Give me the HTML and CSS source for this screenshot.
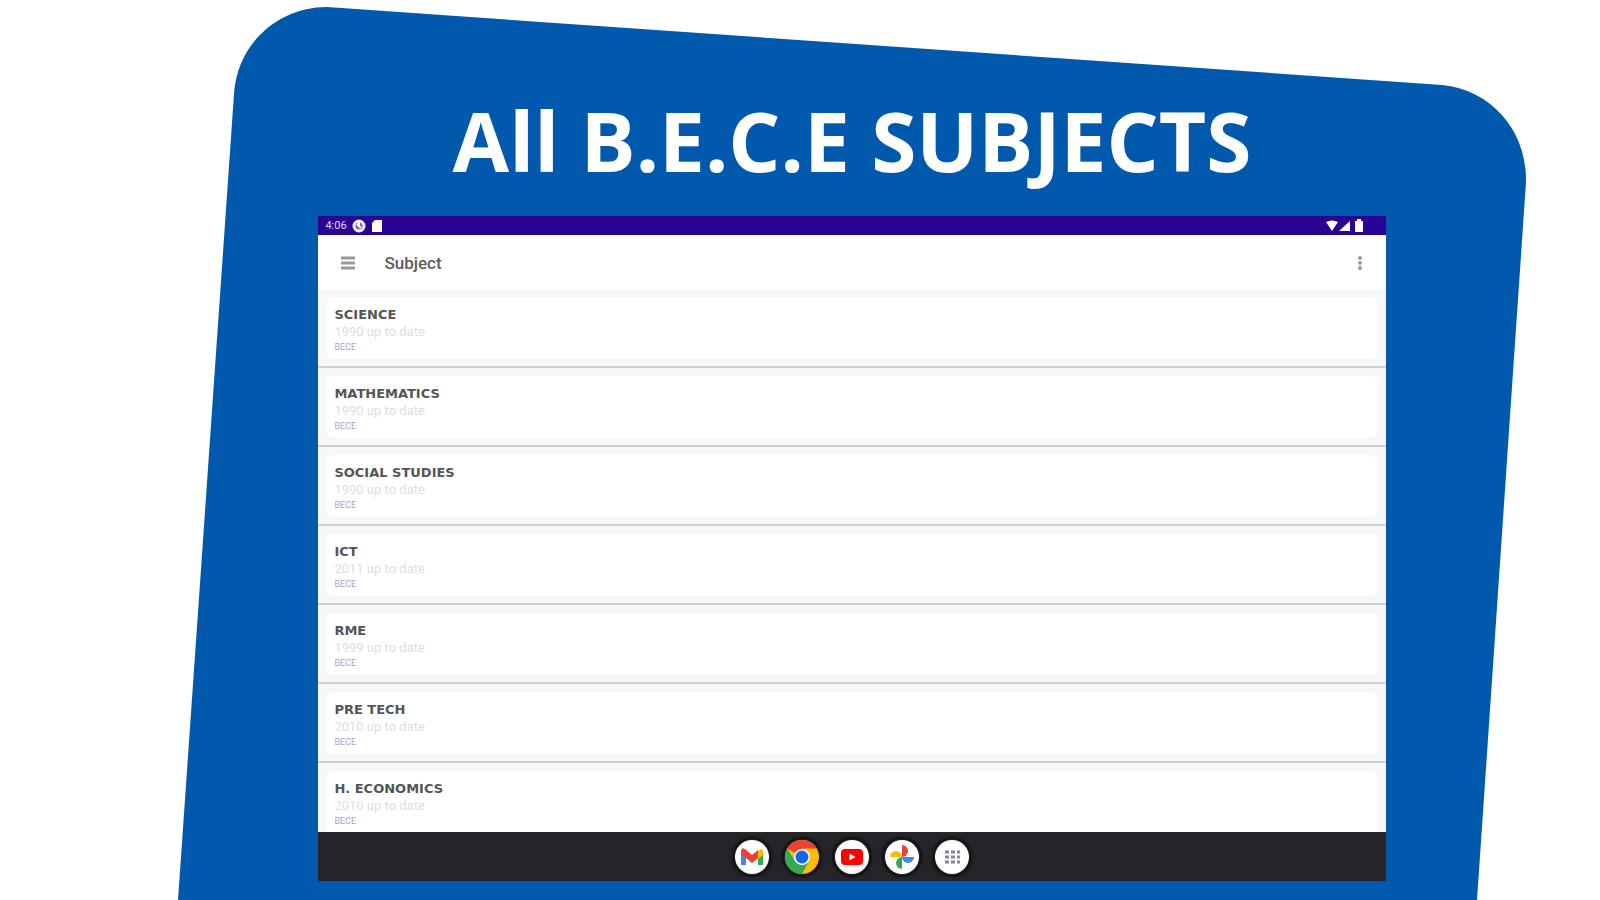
FILE: index.html
```html
<!DOCTYPE html>
<html lang="en">
<head>
<meta charset="utf-8">
<meta name="viewport" content="width=device-width, initial-scale=1">
<title>All B.E.C.E SUBJECTS</title>
<link rel="stylesheet" href="styles.css">
</head>
<body>
<main class="promo">
  <svg class="backdrop" viewBox="0 0 1600 900" preserveAspectRatio="none" aria-hidden="true"><path d="M178 900L234 94C237 45 277 7 327 7L1442 85C1491 90 1527 130 1526 182L1477 900Z" fill="#0059ad"/></svg>
  <h1 class="headline">All B.E.C.E SUBJECTS</h1>
  <section class="tablet">
    <div class="status">
      <span class="status-group">
        <span class="clock">4:06</span>
        <svg width="14" height="14" viewBox="0 0 14 14"><circle cx="7" cy="7" r="5" fill="#8060c0" stroke="#f4eefc" stroke-width="3"/><path d="M5 5l4 4M7 3v4" stroke="#fff" stroke-width="2"/></svg>
        <svg width="12" height="14" viewBox="0 0 12 14"><path d="M4 1h7v12H1V4z" fill="#fff"/></svg>
      </span>
      <svg width="40" height="14" viewBox="0 0 40 14"><path d="M0 3Q6 0 12 3L6 12zM13 12L24 2v10zM29 2h2V0h4v2h2v11h-8z" fill="#fff"/></svg>
    </div>
    <header class="appbar">
      <button class="icon-button" aria-label="Menu"><svg width="16" height="14" viewBox="0 0 16 14"><path d="M1 2h14M1 7h14M1 12h14" stroke="#9a9a9a" stroke-width="3"/></svg></button>
      <h2 class="title">Subject</h2>
      <button class="icon-button" aria-label="More options"><svg width="6" height="16" viewBox="0 0 6 16" fill="#9a9a9a"><circle cx="3" cy="3" r="2"/><circle cx="3" cy="8" r="2"/><circle cx="3" cy="13" r="2"/></svg></button>
    </header>
    <ul class="subjects">
      <li class="row"><article class="card"><h3>SCIENCE</h3><p>1990 up to date</p><a href="#">BECE</a></article></li>
      <li class="row"><article class="card"><h3>MATHEMATICS</h3><p>1990 up to date</p><a href="#">BECE</a></article></li>
      <li class="row"><article class="card"><h3>SOCIAL STUDIES</h3><p>1990 up to date</p><a href="#">BECE</a></article></li>
      <li class="row"><article class="card"><h3>ICT</h3><p>2011 up to date</p><a href="#">BECE</a></article></li>
      <li class="row"><article class="card"><h3>RME</h3><p>1999 up to date</p><a href="#">BECE</a></article></li>
      <li class="row"><article class="card"><h3>PRE TECH</h3><p>2010 up to date</p><a href="#">BECE</a></article></li>
      <li class="row"><article class="card"><h3>H. ECONOMICS</h3><p>2010 up to date</p><a href="#">BECE</a></article></li>
    </ul>
    <nav class="dock">
      <button class="app" aria-label="Gmail"><svg viewBox="0 0 36 36"><circle cx="18" cy="18" r="17" fill="#fff"/><path d="M7 13v13h5V16z" fill="#4285f4"/><path d="M29 13v13h-5V16z" fill="#34a853"/><path d="M24 12l3-2q2 0 2 3v3l-5 4z" fill="#fbbc04"/><path d="M7 12q0-4 4-2l7 6 6-5v8l-6 5-6-5-5-4z" fill="#ea4335"/></svg></button>
      <button class="app" aria-label="Chrome"><svg viewBox="0 0 36 36"><circle cx="18" cy="18" r="17" fill="#fbbc04"/><path d="M18 18L3.300 9.500A17 17 0 0 1 32.700 9.500H18z" fill="#ea4335"/><path d="M3.300 9.500A17 17 0 0 0 18 35L25 22 18 18 11 22z" fill="#34a853"/><circle cx="18" cy="18" r="8" fill="#fff"/><circle cx="18" cy="18" r="6.500" fill="#1a66e8"/></svg></button>
      <button class="app" aria-label="YouTube"><svg viewBox="0 0 36 36"><circle cx="18" cy="18" r="17" fill="#fff"/><rect x="7" y="10" width="22" height="16" rx="4" fill="#f00"/><path d="M15.500 14.500v7l6-3.500z" fill="#fff"/></svg></button>
      <button class="app" aria-label="Photos"><svg viewBox="0 0 36 36"><circle cx="18" cy="18" r="17" fill="#fff"/><path d="M18 18V6a6 6 0 0 1 0 12" fill="#ea4335"/><path d="M18 18h12a6 6 0 0 1-12 0" fill="#4285f4"/><path d="M18 18v12a6 6 0 0 1 0-12" fill="#34a853"/><path d="M18 18H6a6 6 0 0 1 12 0" fill="#fbbc04"/></svg></button>
      <button class="app" aria-label="All apps"><svg viewBox="0 0 36 36"><circle cx="18" cy="18" r="17" fill="#fff"/><path d="M11 13h4M17 13h4M23 13h3M11 18h4M17 18h4M23 18h3M11 23h4M17 23h4M23 23h3" stroke="#85869c" stroke-width="3"/></svg></button>
    </nav>
  </section>
</main>
</body>
</html>
```
FILE: styles.css
```css
* { box-sizing: border-box; }
body { margin: 0; background: #fff; font-family: Roboto, sans-serif; }
h1, h2, h3, p, ul { margin: 0; padding: 0; }
.promo {
  position: relative;
  display: flex;
  flex-direction: column;
  height: 100vh;
  padding: 80px 13.4% 19px 19.9%;
  overflow: hidden;
}
.backdrop { position: absolute; inset: 0; width: 100%; height: 100%; z-index: -1; }
.headline {
  color: #fff;
  font: bold 82px/120px "Open Sans", "Noto Sans", sans-serif;
  text-align: center;
  white-space: nowrap;
  padding-bottom: 16px;
}
.tablet { display: flex; flex-direction: column; flex: 1; min-height: 0; background: #f7f7f7; }
.status {
  display: flex;
  flex-shrink: 0;
  justify-content: space-between;
  align-items: center;
  height: 19px;
  padding: 0 20px 0 7px;
  background: #2b0494;
}
.status-group { display: flex; align-items: center; gap: 5px; color: #e5dcf5; }
.clock { font-size: 11px; line-height: 19px; }
.appbar {
  display: flex;
  align-items: center;
  flex-shrink: 0;
  height: 54px;
  padding: 2px 23px 0 22px;
  background: #fff;
}
.icon-button { display: flex; padding: 0; border: 0; background: none; }
.title { flex: 1; padding-left: 28px; color: #5c5c5c; font-size: 17px; font-weight: 500; line-height: 24px; }
.subjects { flex: 1; min-height: 0; overflow: hidden; list-style: none; }
.row { height: 79px; padding: 8px; border-bottom: 2px solid #cfcfcf; }
.card { height: 62px; padding: 10px 8px 0; border-radius: 8px; background: #fff; }
.card h3 { color: #555; font: bold 13px/16px "DejaVu Sans", sans-serif; }
.card p { color: #dedede; font-size: 13px; line-height: 18px; }
.card a { display: block; width: max-content; color: #a9a4ce; font-size: 9px; line-height: 13px; text-decoration: none; }
.dock {
  display: flex;
  flex-shrink: 0;
  justify-content: center;
  align-items: center;
  gap: 14px;
  height: 49px;
  background: #242429;
}
.app { width: 36px; height: 36px; padding: 0; border: 0; border-radius: 50%; background: none; box-shadow: 0 0 2px 2px #111114; }
.app svg { display: block; width: 100%; height: 100%; }
```
